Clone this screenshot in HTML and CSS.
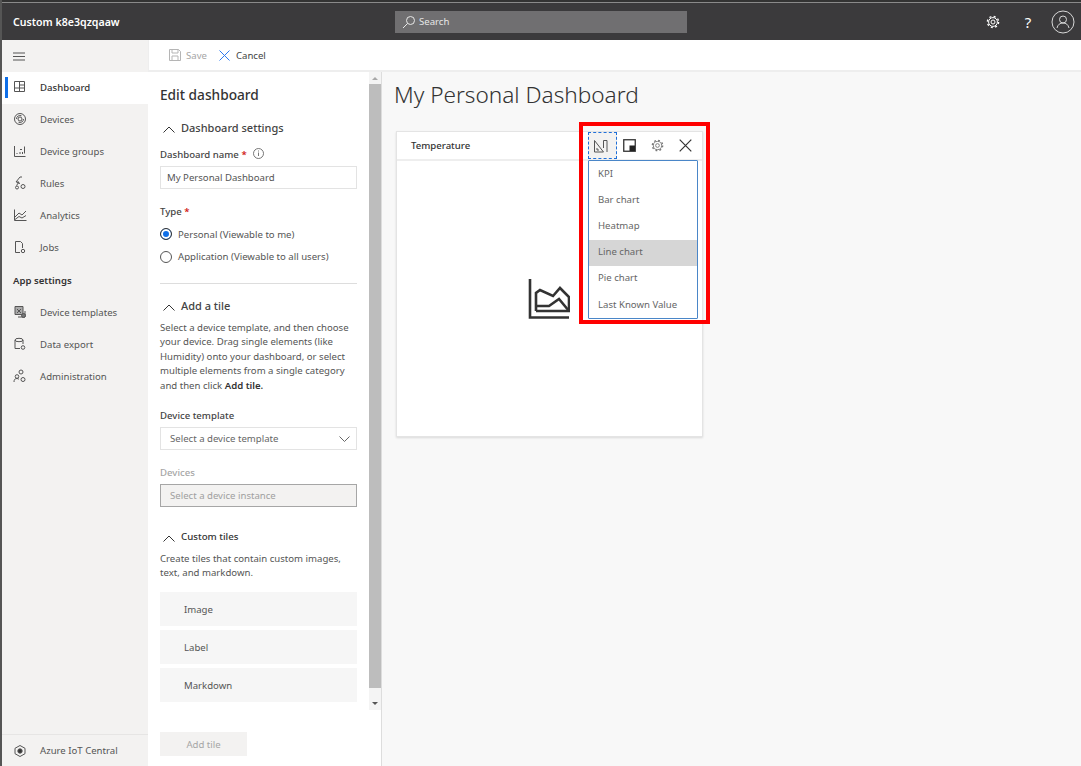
FILE: index.html
```html
<!DOCTYPE html>
<html lang="en">

<head>
    <meta charset="UTF-8">
    <meta name="viewport" content="width=device-width, initial-scale=1.0">
    <title>Custom k8e3qzqaaw</title>
    <link rel="stylesheet" href="styles.css">
</head>

<body>
    <!-- Top bar -->
    <header class="topbar">
        <div class="app-name">Custom k8e3qzqaaw</div>
        <div class="search">
            <svg width="14" height="14" viewBox="0 0 14 14" fill="none" stroke="#e8e8e8" stroke-width="1">
                <circle cx="8.5" cy="5.5" r="4"/>
                <path d="M5.5 8.5L1 13"/>
            </svg>
            <span>Search</span>
        </div>
        <div class="top-icons">
            <svg class="top-gear" width="14" height="14" viewBox="0 0 14 14" fill="none" stroke="#fff" stroke-width="1">
                <circle cx="7" cy="7" r="2"/>
                <circle cx="7" cy="7" r="4.400"/>
                <circle cx="7" cy="7" r="5.600" stroke-dasharray="2 2.400" stroke-width="1.400"/>
            </svg>
            <span class="top-help">?</span>
            <svg class="top-user" width="24" height="24" viewBox="0 0 24 24" fill="none" stroke="#d8d8d8" stroke-width="1">
                <circle cx="12" cy="12" r="11"/>
                <circle cx="12" cy="9.5" r="3.5"/>
                <path d="M6 18c.8-3.5 3-5 6-5s5.200 1.500 6 5"/>
            </svg>
        </div>
    </header>

    <div class="layout">
        <!-- Sidebar -->
        <nav class="sidebar">
            <div class="burger">
                <svg width="12" height="9" viewBox="0 0 12 9" stroke="#555" stroke-width="1"><path d="M0 1h12M0 4.500h12M0 8h12"/></svg>
            </div>
            <a class="nav-item active">
                <svg class="nav-icon" viewBox="0 0 14 14"><path d="M1.500 1.500h10v10h-10zM1.500 8h10M6.500 1.500v10M6.500 5h5"/></svg>
                <span>Dashboard</span>
            </a>
            <a class="nav-item">
                <svg class="nav-icon" viewBox="0 0 14 14"><circle cx="7" cy="7" r="5.500"/><circle cx="7" cy="7" r="2"/><path d="M3.500 7a3.500 3.500 0 0 1 5-3.200M10.500 7a3.500 3.500 0 0 1-5 3.200"/></svg>
                <span>Devices</span>
            </a>
            <a class="nav-item">
                <svg class="nav-icon" viewBox="0 0 14 14"><path d="M1.500 2v10.500h11M11.500 2.500v7M4 10v-1M7 10V8M9.500 10V8M7 5.500h2"/></svg>
                <span>Device groups</span>
            </a>
            <a class="nav-item">
                <svg class="nav-icon" viewBox="0 0 14 14"><path d="M7 1L3 6h3L3.500 9.500M9 1H7M4 6.500l3 1"/><circle cx="4" cy="11.500" r="1.500"/><circle cx="10" cy="10.500" r="2"/></svg>
                <span>Rules</span>
            </a>
            <a class="nav-item">
                <svg class="nav-icon" viewBox="0 0 14 14"><path d="M1.500 1.500v11h12M2 9l4-4 3 2 4-4M2 11.500l4-3 3 1.500 4-2.500"/></svg>
                <span>Analytics</span>
            </a>
            <a class="nav-item">
                <svg class="nav-icon" viewBox="0 0 14 14"><path d="M7 12.500H2.500v-11h5l2 2V8"/><circle cx="10" cy="11" r="1.700"/></svg>
                <span>Jobs</span>
            </a>
            <div class="nav-title">App settings</div>
            <a class="nav-item">
                <svg class="nav-icon" viewBox="0 0 14 14"><path d="M2 1.500h8v8H2z" fill="#aaa"/><path d="M4 4l4 4M8 4l-4 4M5 12h7V6"/><circle cx="10.500" cy="10.500" r="2" fill="#777"/></svg>
                <span>Device templates</span>
            </a>
            <a class="nav-item">
                <svg class="nav-icon" viewBox="0 0 14 14"><ellipse cx="6" cy="3" rx="4" ry="1.700"/><path d="M2 3v8.500h5M10 3v4"/><circle cx="10" cy="10.500" r="1.800"/></svg>
                <span>Data export</span>
            </a>
            <a class="nav-item">
                <svg class="nav-icon" viewBox="0 0 14 14"><circle cx="8" cy="3" r="2"/><circle cx="4" cy="7.500" r="1.800"/><path d="M1 13c0-2.500 1-3.500 3-3.500 1 0 1.500.3 2 1"/><circle cx="10" cy="10.500" r="2"/></svg>
                <span>Administration</span>
            </a>
            <a class="nav-item nav-footer">
                <svg class="nav-icon" viewBox="0 0 14 14"><path d="M7 1.500l5 2.800v5.400l-5 2.800-5-2.800V4.300z"/><circle cx="7" cy="7" r="2.200" fill="#333"/></svg>
                <span>Azure IoT Central</span>
            </a>
        </nav>

        <div class="main">
            <!-- Save / cancel -->
            <div class="toolbar">
                <button class="tool-btn disabled">
                    <svg width="12" height="12" viewBox="0 0 12 12" fill="none" stroke="#b5b5b5"><path d="M.5.500h9l2 2v9H.5zM3 .5v3.500h6V.5M3 11.500V7h6v4.500"/></svg>
                    Save
                </button>
                <button class="tool-btn cancel-btn">
                    <svg width="11" height="11" viewBox="0 0 11 11" stroke="#2f7bf0"><path d="M.5.500l10 10M10.500.5l-10 10"/></svg>
                    Cancel
                </button>
            </div>

            <div class="work">
                <!-- Edit panel -->
                <aside class="panel">
                    <div class="panel-scroll">
                        <div class="panel-body">
                            <h2 class="panel-title">Edit dashboard</h2>

                            <div class="section-head first">
                                <svg class="chevron" viewBox="0 0 12 7"><path d="M.5 6.500L6 1l5.500 5.500"/></svg>
                                Dashboard settings
                            </div>
                            <label class="field-label name-label">Dashboard name <i>*</i>
                                <svg class="info" width="11" height="11" viewBox="0 0 11 11" fill="none" stroke="#555" stroke-width=".8"><circle cx="5.500" cy="5.500" r="5"/><path d="M5.500 4.500v3.500M5.500 2.500v1"/></svg>
                            </label>
                            <div class="input">My Personal Dashboard</div>

                            <label class="field-label type-label">Type <i>*</i></label>
                            <div class="radio checked"><span class="dot"></span>Personal (Viewable to me)</div>
                            <div class="radio"><span class="dot"></span>Application (Viewable to all users)</div>

                            <hr class="divider">

                            <div class="section-head add-head">
                                <svg class="chevron" viewBox="0 0 12 7"><path d="M.5 6.500L6 1l5.500 5.500"/></svg>
                                Add a tile
                            </div>
                            <p class="help">Select a device template, and then choose your device. Drag single elements (like Humidity) onto your dashboard, or select multiple elements from a single category and then click <b>Add tile.</b></p>

                            <label class="field-label template-label">Device template</label>
                            <div class="input select">Select a device template
                                <svg width="11" height="6" viewBox="0 0 11 6" fill="none" stroke="#666"><path d="M.5.500l5 5 5-5"/></svg>
                            </div>

                            <label class="field-label devices-label">Devices</label>
                            <div class="input locked">Select a device instance</div>

                            <div class="section-head small">
                                <svg class="chevron" viewBox="0 0 12 7"><path d="M.5 6.500L6 1l5.500 5.500"/></svg>
                                Custom tiles
                            </div>
                            <p class="help custom-help">Create tiles that contain custom images, text, and markdown.</p>
                            <div class="tile-btn">Image</div>
                            <div class="tile-btn">Label</div>
                            <div class="tile-btn">Markdown</div>
                        </div>
                        <div class="scrollbar">
                            <span class="arrow up"></span>
                            <span class="thumb"></span>
                            <span class="arrow down"></span>
                        </div>
                    </div>
                    <div class="panel-foot">
                        <button class="add-tile">Add tile</button>
                    </div>
                </aside>

                <!-- Dashboard -->
                <section class="board">
                    <h1>My Personal Dashboard</h1>
                    <div class="card">
                        <div class="card-head">
                            <span class="card-title">Temperature</span>
                            <div class="card-tools">
                                <span class="card-tool focused">
                                    <svg width="14" height="14" viewBox="0 0 14 14" fill="none" stroke="#555"><path d="M.5 1.500l9 11.500H.5zM3 9v2h2M13 1.500V13M9.500 1.500h3.500M9.500 1.500V9"/></svg>
                                </span>
                                <span class="card-tool">
                                    <svg width="13" height="13" viewBox="0 0 13 13"><rect x=".75" y=".75" width="11.500" height="11.500" fill="#fff" stroke="#333" stroke-width="1.300"/><rect x="6.500" y="6.500" width="5.500" height="5.500" fill="#222"/></svg>
                                </span>
                                <span class="card-tool">
                                    <svg width="13" height="13" viewBox="0 0 14 14" fill="none" stroke="#777" stroke-width="1">
                                        <circle cx="7" cy="7" r="2"/>
                                        <circle cx="7" cy="7" r="4.400"/>
                                        <circle cx="7" cy="7" r="5.600" stroke-dasharray="2 2.400" stroke-width="1.400"/>
                                    </svg>
                                </span>
                                <span class="card-tool">
                                    <svg width="13" height="13" viewBox="0 0 13 13" stroke="#333" stroke-width="1.200"><path d="M.7.700l11.600 11.600M12.300.7L.7 12.300"/></svg>
                                </span>
                            </div>
                        </div>
                        <div class="card-body">
                            <svg class="placeholder" width="42" height="42" viewBox="0 0 42 42" fill="none" stroke="#333" stroke-width="2.600">
                                <path d="M2 1v38.500h39"/>
                                <path d="M8 33V15l4-3 13 6 7-8 9 9v14H8"/>
                                <path d="M8 28h13l10-7 10 12"/>
                            </svg>
                        </div>
                        <ul class="chart-menu">
                            <li>KPI</li>
                            <li>Bar chart</li>
                            <li>Heatmap</li>
                            <li class="selected">Line chart</li>
                            <li>Pie chart</li>
                            <li>Last Known Value</li>
                        </ul>
                        <div class="callout"></div>
                    </div>
                </section>
            </div>
        </div>
    </div>
</body>

</html>
```

FILE: styles.css
```css
* {
    box-sizing: border-box;
}

html,
body {
    height: 100%;
}

body {
    margin: 0;
    font-family: "Noto Sans", "Open Sans", Arial, sans-serif;
    font-size: 9.6px;
    color: #444;
    background: #fff;
    border-left: 2px solid #555;
    display: flex;
    flex-direction: column;
    overflow: hidden;
}

/* top bar */
.topbar {
    height: 40px;
    flex: none;
    display: flex;
    align-items: center;
    background: #3b3a3c;
    border-top: 2px solid #333;
    box-shadow: inset 0 1px 0 #8a8a8a;
    position: relative;
    padding-top: 1px;
}

.app-name {
    width: 393px;
    padding-left: 11px;
    color: #fff;
    font-size: 10.600px;
    font-weight: 600;
}

.search {
    width: 292px;
    height: 22px;
    background: #706f71;
    display: flex;
    align-items: center;
    gap: 3px;
    padding-left: 7px;
    color: #e6e6e6;
}

.top-icons {
    margin-left: auto;
    display: flex;
    align-items: center;
    padding-right: 6px;
}

.top-gear {
    margin-right: 23px;
}

.top-help {
    color: #fff;
    font-size: 15px;
    width: 10px;
    margin-right: 18px;
    text-align: center;
}

/* sidebar */
.layout {
    flex: 1;
    display: flex;
    min-height: 0;
}

.sidebar {
    width: 146px;
    flex: none;
    background: #f3f2f1;
    display: flex;
    flex-direction: column;
}

.burger {
    height: 32px;
    display: flex;
    align-items: center;
    padding-left: 11px;
}

.nav-item {
    height: 32px;
    flex: none;
    display: flex;
    align-items: center;
    padding: 0 0 2px 11px;
    position: relative;
    color: #555;
}

.nav-icon {
    width: 14px;
    height: 14px;
    margin-right: 13px;
    fill: none;
    stroke: #555;
    stroke-width: 1;
}

.nav-item.active {
    background: #fff;
    color: #333;
    font-weight: 500;
}

.nav-item.active::before {
    content: "";
    position: absolute;
    left: 3px;
    top: 5px;
    bottom: 6px;
    width: 2.500px;
    background: #0f6fe8;
}

.nav-title {
    height: 33px;
    padding: 0 0 1px 11px;
    display: flex;
    align-items: center;
    color: #333;
    font-weight: 600;
}

.nav-footer {
    margin-top: auto;
    padding-bottom: 0;
    border-top: 1px solid #e6e5e4;
}

/* main area */
.main {
    flex: 1;
    display: flex;
    flex-direction: column;
    min-width: 0;
}

.toolbar {
    height: 32px;
    flex: none;
    display: flex;
    align-items: center;
    gap: 12px;
    padding-left: 20px;
    border-bottom: 2px solid #eee;
    border-left: 1px solid #eee;
}

.tool-btn {
    border: 0;
    background: none;
    padding: 0;
    font: inherit;
    color: #444;
    display: flex;
    align-items: center;
    gap: 5px;
}

.tool-btn.disabled {
    color: #a6a6a6;
}

.cancel-btn {
    gap: 6px;
}

.work {
    flex: 1;
    display: flex;
    min-height: 0;
}

/* edit panel */
.panel {
    width: 234px;
    flex: none;
    border-right: 1px solid #ddd;
    display: flex;
    flex-direction: column;
}

.panel-scroll {
    height: 638px;
    flex: none;
    display: flex;
}

.panel-body {
    flex: 1;
    padding: 0 12px;
    overflow: hidden;
}

.panel-title {
    margin: 14px 0 0;
    font-size: 13.700px;
    line-height: 18px;
    font-weight: 500;
    color: #333;
}

.section-head {
    display: flex;
    align-items: center;
    gap: 6px;
    font-size: 11px;
    font-weight: 500;
    color: #444;
    height: 16px;
}

.section-head.first {
    margin-top: 15px;
}

.section-head.add-head {
    margin-top: 13px;
}

.section-head.small {
    font-size: 9.700px;
    margin-top: 21px;
    color: #333;
}

.chevron {
    width: 12px;
    height: 7px;
    margin: 4px 0 0 3px;
    fill: none;
    stroke: #333;
    stroke-width: 1;
}

.field-label {
    display: block;
    font-weight: 500;
    color: #444;
    line-height: 14px;
}

.field-label i {
    color: #c00;
    font-style: normal;
}

.name-label {
    margin-top: 12px;
    position: relative;
}

.info {
    position: relative;
    top: 1px;
    margin-left: 4px;
}

.type-label {
    margin-top: 16px;
}

.template-label {
    margin-top: 16px;
}

.devices-label {
    margin-top: 16px;
    color: #a6a6a6;
}

.input {
    height: 23px;
    margin-top: 4px;
    border: 1px solid #e3e3e3;
    padding: 0 6px;
    display: flex;
    align-items: center;
    justify-content: space-between;
    color: #555;
}

.select {
    padding: 0 6px 0 9px;
    color: #666;
}

.locked {
    background: #f3f2f1;
    border-color: #a6a6a6;
    color: #a0a0a0;
    padding-left: 9px;
}

.radio {
    display: flex;
    align-items: center;
    gap: 6px;
    height: 22.500px;
    color: #555;
}

.type-label + .radio {
    margin-top: 4px;
}

.dot {
    width: 12px;
    height: 12px;
    border: 1px solid #555;
    border-radius: 50%;
    background: #fff;
}

.checked .dot {
    border-color: #333;
    background: #0f6fe8;
    box-shadow: inset 0 0 0 2px #fff;
}

.divider {
    border: 0;
    border-top: 1px solid #ddd;
    margin: 15px 0 0;
}

.help {
    margin: 8px 0 0;
    line-height: 14.400px;
    color: #555;
}

.help b {
    font-weight: 600;
    color: #333;
}

.custom-help {
    margin-top: 8px;
    margin-bottom: 11px;
}

.tile-btn {
    height: 34px;
    margin-bottom: 4px;
    background: #f6f6f6;
    padding: 1px 0 0 24px;
    display: flex;
    align-items: center;
    color: #555;
}

.scrollbar {
    width: 12px;
    flex: none;
    background: #f4f4f4;
    display: flex;
    flex-direction: column;
    align-items: center;
}

.arrow {
    width: 0;
    height: 0;
    border-left: 3px solid transparent;
    border-right: 3px solid transparent;
    flex: none;
}

.arrow.up {
    border-bottom: 3px solid #a8a8a8;
    margin: 5px 0 4px;
}

.arrow.down {
    border-top: 3px solid #555;
    margin: 14px 0 5px;
}

.thumb {
    flex: 1;
    width: 100%;
    background: #bdbdbd;
}

.panel-foot {
    flex: 1;
    padding: 22px 12px 0;
}

.add-tile {
    width: 87px;
    height: 24px;
    border: 0;
    background: #f3f2f1;
    color: #a6a6a6;
    font: inherit;
}

/* dashboard */
.board {
    flex: 1;
    background: #f8f8f8;
    padding: 7px 12px;
    min-width: 0;
}

.board h1 {
    margin: 0;
    font-size: 22.600px;
    font-weight: 300;
    line-height: 32px;
    color: #333;
}

.card {
    width: 307px;
    height: 306px;
    margin: 20px 0 0 2px;
    background: #fff;
    border: 1px solid #e4e4e4;
    box-shadow: 0 1px 2px rgba(0, 0, 0, .12);
    position: relative;
    display: flex;
    flex-direction: column;
}

.card-head {
    height: 29px;
    flex: none;
    border-bottom: 2px solid #eee;
    display: flex;
    align-items: center;
    justify-content: space-between;
    padding-left: 14px;
}

.card-title {
    font-weight: 500;
    color: #333;
}

.card-tools {
    display: flex;
    margin-right: 3px;
    height: 100%;
}

.card-tool {
    width: 28px;
    display: flex;
    align-items: center;
    justify-content: center;
}

.card-tool.focused {
    width: 29px;
    padding-right: 4px;
    margin-right: -2px;
    background: #f3f2f1;
    outline: 1px dashed #1f6fd8;
    outline-offset: -1px;
}

.card-body {
    flex: 1;
    display: flex;
    align-items: center;
    justify-content: center;
}

.placeholder {
    margin-right: 2px;
}

/* chart type menu */
.chart-menu {
    position: absolute;
    left: 191px;
    top: 28px;
    width: 110px;
    margin: 0;
    padding: 0;
    list-style: none;
    background: #fff;
    border: 1px solid #4a86c8;
    border-radius: 1px;
}

.chart-menu li {
    height: 26.200px;
    padding: 0 0 2px 9px;
    display: flex;
    align-items: center;
    color: #666;
}

.chart-menu li.selected {
    background: #d6d6d6;
}

/* red annotation box */
.callout {
    position: absolute;
    left: 182px;
    top: -10px;
    width: 131px;
    height: 202px;
    border: 4px solid #f00;
    pointer-events: none;
}
```
